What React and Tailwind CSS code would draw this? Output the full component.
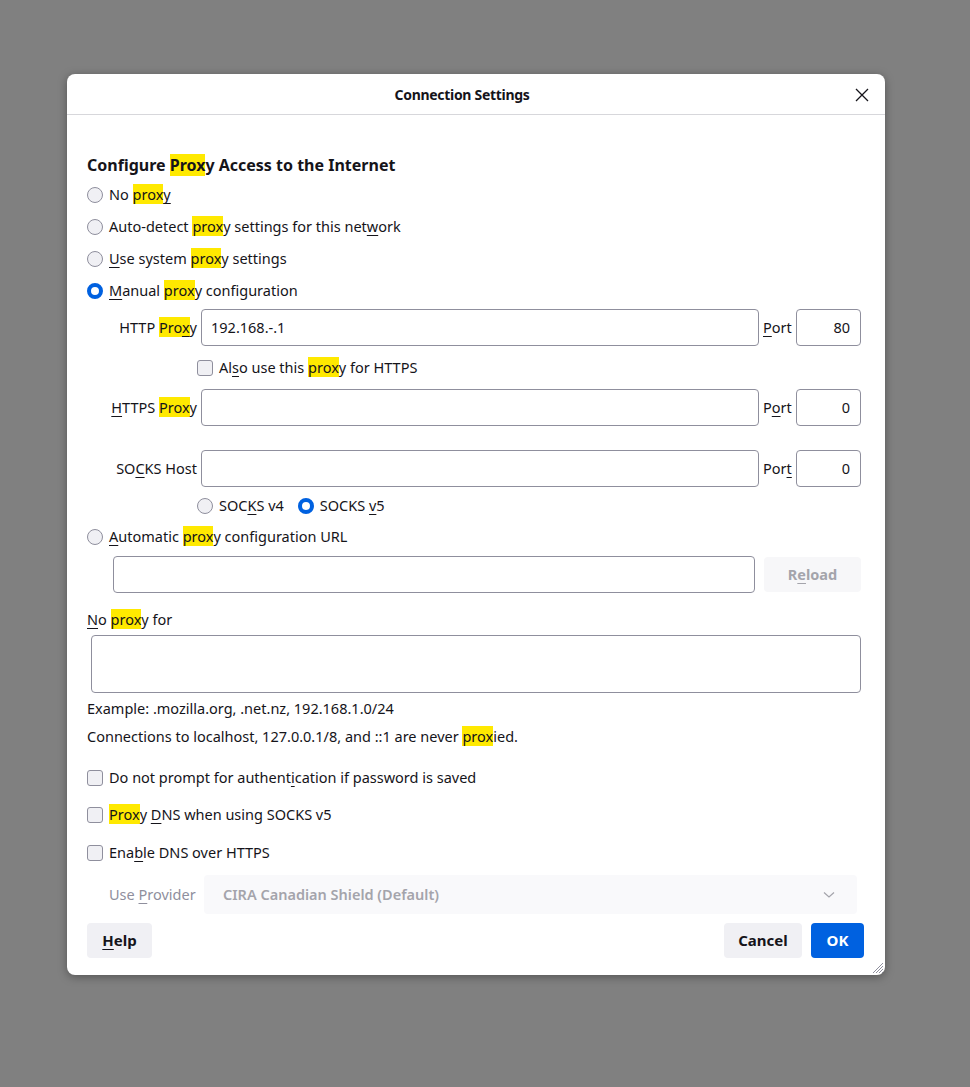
import React from 'react';

const Hl = ({ children }) => <span className="bg-[#ffe900]">{children}</span>;
const U = ({ children }) => (
    <span className="underline decoration-1 underline-offset-[3px]">{children}</span>
);

function Radio({ checked }) {
    return checked ? (
        <span className="w-4 h-4 shrink-0 rounded-full border-[4px] border-[#0061e0] bg-white" />
    ) : (
        <span className="w-4 h-4 shrink-0 rounded-full border border-[#8f8f9d] bg-[#f0f0f4]" />
    );
}

function Check() {
    return <span className="w-4 h-4 shrink-0 rounded-[3px] border border-[#8f8f9d] bg-[#f0f0f4]" />;
}

function RadioRow({ checked, children, className = '' }) {
    return (
        <label className={`h-8 flex items-center gap-[6px] ${className}`}>
            <Radio checked={checked} />
            <span>{children}</span>
        </label>
    );
}

function ProxyRow({ label, value, port, portLabel, className = '' }) {
    return (
        <div className={`h-[37px] flex items-center ${className}`}>
            <div className="w-[114px] pr-[4px] text-right whitespace-nowrap">{label}</div>
            <div className="w-[558px] h-[37px] rounded-[4px] border border-[#8f8f9d] flex items-center pl-[9px]">
                {value}
            </div>
            <div className="w-[37px] pl-[4px]">{portLabel}</div>
            <div className="w-[65px] h-[37px] rounded-[4px] border border-[#8f8f9d] flex items-center justify-end pr-[10px]">
                {port}
            </div>
        </div>
    );
}

export default function App() {
    return (
        <div className="min-h-screen bg-[#808080] pl-[67px] pt-[74px] font-['Noto_Sans',sans-serif] text-[14.5px] text-[#15141a]">
            <div className="relative w-[818px] h-[901px] bg-white rounded-[8px] shadow-[0_2px_10px_rgba(0,0,0,0.35)]">
                {/* Title bar */}
                <div className="relative h-[41px] border-b border-[#d7d7db] flex items-center justify-center pr-[28px]">
                    <span className="text-[14px] font-bold tracking-[-0.3px]">Connection Settings</span>
                    <svg className="absolute right-[16px] top-[14px] w-[14px] h-[14px]" viewBox="0 0 14 14">
                        <path d="M1 1 L13 13 M13 1 L1 13" stroke="#15141a" strokeWidth="1.3" fill="none" />
                    </svg>
                </div>

                <div className="pt-[38px] pl-[20px] pr-[24px]">
                    <h2 className="h-[24px] leading-[24px] text-[16px] font-bold">
                        Configure <Hl>Prox</Hl>y Access to the Internet
                    </h2>

                    <div className="mt-[2px]">
                        <RadioRow>No <Hl>prox</Hl><U>y</U></RadioRow>
                        <RadioRow>Auto-detect <Hl>prox</Hl>y settings for this net<U>w</U>ork</RadioRow>
                        <RadioRow><U>U</U>se system <Hl>prox</Hl>y settings</RadioRow>
                        <RadioRow checked><U>M</U>anual <Hl>prox</Hl>y configuration</RadioRow>
                    </div>

                    <ProxyRow
                        className="mt-[2px]"
                        label={<>HTTP <Hl>Pro<U>x</U></Hl>y</>}
                        value="192.168.-.1"
                        portLabel={<><U>P</U>ort</>}
                        port="80"
                    />
                    <label className="h-[43px] ml-[110px] flex items-center gap-[6px]">
                        <Check />
                        <span>Al<U>s</U>o use this <Hl>prox</Hl>y for HTTPS</span>
                    </label>
                    <ProxyRow
                        label={<><U>H</U>TTPS <Hl>Prox</Hl>y</>}
                        value=""
                        portLabel={<>P<U>o</U>rt</>}
                        port="0"
                    />
                    <ProxyRow
                        className="mt-[24px]"
                        label={<>SO<U>C</U>KS Host</>}
                        value=""
                        portLabel={<>Por<U>t</U></>}
                        port="0"
                    />
                    <div className="mt-[3px] ml-[110px] flex items-center gap-[14px]">
                        <RadioRow>SOC<U>K</U>S v4</RadioRow>
                        <RadioRow checked>SOCKS <U>v</U>5</RadioRow>
                    </div>
                    <RadioRow className="-mt-[1px]"><U>A</U>utomatic <Hl>prox</Hl>y configuration URL</RadioRow>

                    <div className="mt-[3px] ml-[26px] flex items-center gap-[9px]">
                        <div className="w-[642px] h-[37px] rounded-[4px] border border-[#8f8f9d]" />
                        <button className="w-[97px] h-[35px] rounded-[4px] bg-[#f7f7f9] text-[#a4a4ab] font-bold">
                            R<U>e</U>load
                        </button>
                    </div>

                    <div className="mt-[15px] h-[22px] leading-[22px]"><U>N</U>o <Hl>prox</Hl>y for</div>
                    <div className="mt-[5px] ml-[4px] h-[58px] rounded-[4px] border border-[#8f8f9d]" />

                    <div className="mt-[4px] h-[22px] leading-[22px]">Example: .mozilla.org, .net.nz, 192.168.1.0/24</div>
                    <div className="mt-[6px] h-[22px] leading-[22px]">
                        Connections to localhost, 127.0.0.1/8, and ::1 are never <Hl>prox</Hl>ied.
                    </div>

                    <div className="mt-[12px]">
                        <label className="h-[37px] flex items-center gap-[6px]">
                            <Check />
                            <span>Do not prompt for authent<U>i</U>cation if password is saved</span>
                        </label>
                        <label className="h-[38px] flex items-center gap-[6px]">
                            <Check />
                            <span><Hl>Prox</Hl>y <U>D</U>NS when using SOCKS v5</span>
                        </label>
                        <label className="h-[37px] flex items-center gap-[6px]">
                            <Check />
                            <span>Ena<U>b</U>le DNS over HTTPS</span>
                        </label>
                    </div>

                    <div className="mt-[4px] ml-[22px] flex items-center gap-[8px]">
                        <span className="w-[87px] text-[#8f8f9d] whitespace-nowrap">Use <U>P</U>rovider</span>
                        <div className="w-[653px] h-[39px] rounded-[4px] bg-[#f9f9fb] flex items-center justify-between pl-[19px] pr-[22px]">
                            <span className="font-semibold text-[#a4a4ab]">CIRA Canadian Shield (Default)</span>
                            <svg className="w-[12px] h-[8px]" viewBox="0 0 12 8">
                                <path d="M1 1.5 L6 6 L11 1.5" stroke="#a4a4ab" strokeWidth="1.2" fill="none" />
                            </svg>
                        </div>
                    </div>

                    {/* Footer */}
                    <div className="mt-[9px] -mr-[3px] flex items-center justify-between">
                        <button className="w-[65px] h-[35px] rounded-[4px] bg-[#f0f0f4] font-bold text-[15px]">
                            <U>H</U>elp
                        </button>
                        <div className="flex items-center gap-[9px]">
                            <button className="w-[78px] h-[35px] rounded-[4px] bg-[#f0f0f4] font-bold text-[15px]">Cancel</button>
                            <button className="w-[53px] h-[35px] rounded-[4px] bg-[#0061e0] text-white font-bold text-[15px]">OK</button>
                        </div>
                    </div>
                </div>

                {/* Resize grip */}
                <svg className="absolute right-[1px] bottom-[1px] w-[12px] h-[12px]" viewBox="0 0 12 12">
                    <path d="M11 1 L1 11 M11 4 L4 11 M11 7 L7 11 M11 10 L10 11" stroke="#8f8f9d" strokeWidth="1" fill="none" />
                </svg>
            </div>
        </div>
    );
}
